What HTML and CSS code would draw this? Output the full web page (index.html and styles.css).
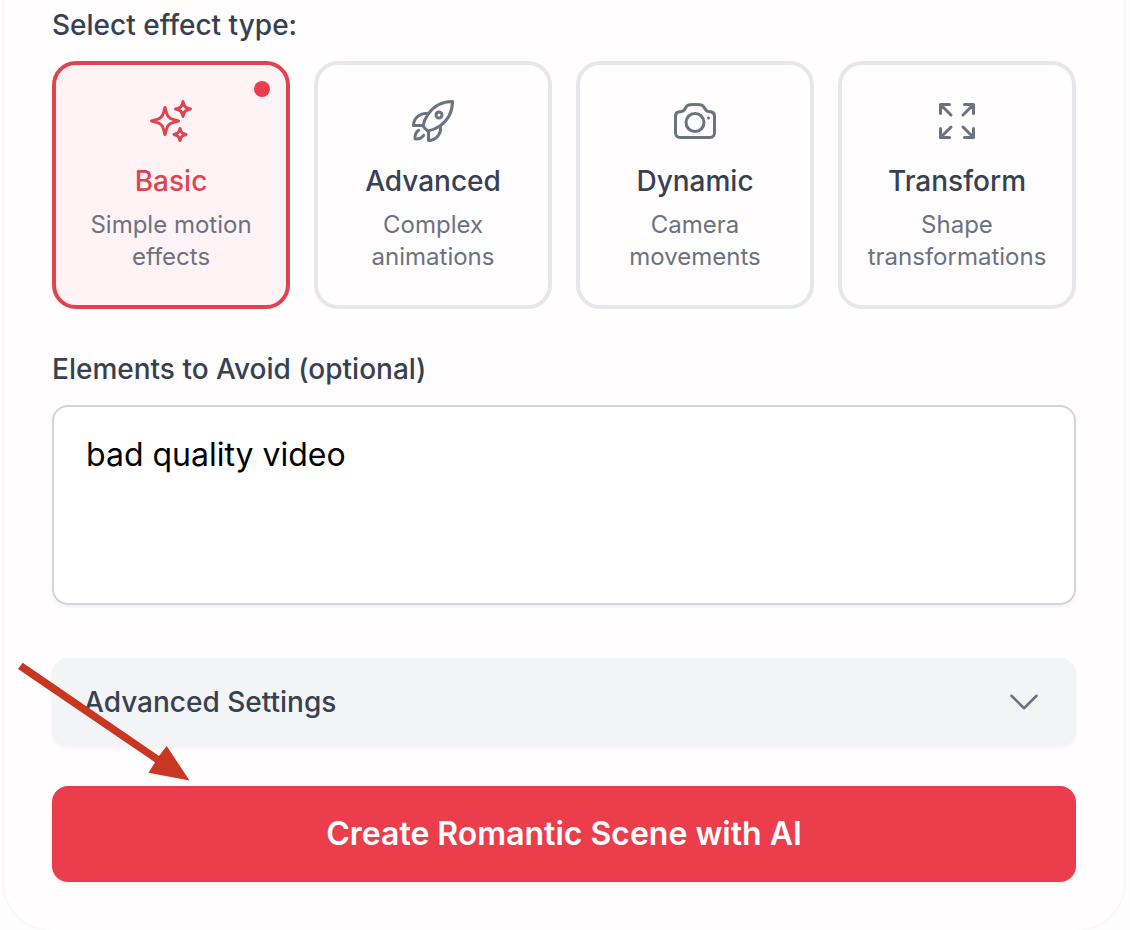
FILE: index.html
```html
<!DOCTYPE html>
<html lang="en">
<head>
<meta charset="utf-8">
<meta name="viewport" content="width=device-width, initial-scale=1">
<title>Create Romantic Scene</title>
<link rel="stylesheet" href="styles.css">
</head>
<body>
<form class="panel">
  <fieldset class="effects">
    <legend class="label">Select effect type:</legend>
    <div class="effect-grid">
      <button type="button" class="effect is-selected" aria-pressed="true">
        <span class="dot"></span>
        <svg class="effect-icon" viewBox="0 0 24 24" aria-hidden="true"><path d="M9.813 15.904 9 18.75l-.813-2.846a4.5 4.5 0 0 0-3.09-3.09L2.25 12l2.846-.813a4.5 4.5 0 0 0 3.09-3.09L9 5.25l.813 2.846a4.5 4.5 0 0 0 3.09 3.09L15.75 12l-2.846.813a4.5 4.5 0 0 0-3.09 3.09ZM18.259 8.715 18 9.75l-.259-1.035a3.375 3.375 0 0 0-2.455-2.456L14.25 6l1.036-.259a3.375 3.375 0 0 0 2.455-2.456L18 2.25l.259 1.035a3.375 3.375 0 0 0 2.456 2.456L21.75 6l-1.035.259a3.375 3.375 0 0 0-2.456 2.456ZM16.894 20.567 16.5 21.75l-.394-1.183a2.25 2.25 0 0 0-1.423-1.423L13.5 18.75l1.183-.394a2.25 2.25 0 0 0 1.423-1.423l.394-1.183.394 1.183a2.25 2.25 0 0 0 1.423 1.423l1.183.394-1.183.394a2.25 2.25 0 0 0-1.423 1.423Z"/></svg>
        <span class="effect-name">Basic</span>
        <span class="effect-text">Simple motion effects</span>
      </button>
      <button type="button" class="effect" aria-pressed="false">
        <svg class="effect-icon" viewBox="0 0 24 24" aria-hidden="true"><path d="M15.59 14.37a6 6 0 0 1-5.84 7.38v-4.8m5.84-2.58a14.98 14.98 0 0 0 6.16-12.12A14.98 14.98 0 0 0 9.631 8.41m5.96 5.96a14.926 14.926 0 0 1-5.841 2.58m-.119-8.54a6 6 0 0 0-7.381 5.84h4.8m2.581-5.84a14.927 14.927 0 0 0-2.58 5.84m2.699 2.7c-.103.021-.207.041-.311.06a15.09 15.09 0 0 1-2.448-2.448 14.9 14.9 0 0 1 .06-.312m-2.24 2.39a4.493 4.493 0 0 0-1.757 4.306 4.493 4.493 0 0 0 4.306-1.758M16.5 9a1.5 1.5 0 1 1-3 0 1.5 1.5 0 0 1 3 0Z"/></svg>
        <span class="effect-name">Advanced</span>
        <span class="effect-text">Complex animations</span>
      </button>
      <button type="button" class="effect" aria-pressed="false">
        <svg class="effect-icon" viewBox="0 0 24 24" aria-hidden="true"><path d="M6.827 6.175A2.31 2.31 0 0 1 5.186 7.23c-.38.054-.757.112-1.134.175C2.999 7.58 2.25 8.507 2.25 9.574V18a2.25 2.25 0 0 0 2.25 2.25h15A2.25 2.25 0 0 0 21.75 18V9.574c0-1.067-.75-1.994-1.802-2.169a47.865 47.865 0 0 0-1.134-.175 2.31 2.31 0 0 1-1.64-1.055l-.822-1.316a2.192 2.192 0 0 0-1.736-1.039 48.774 48.774 0 0 0-5.232 0 2.192 2.192 0 0 0-1.736 1.039l-.821 1.316Z"/><path d="M16.5 12.75a4.5 4.5 0 1 1-9 0 4.5 4.5 0 0 1 9 0ZM18.75 10.5h.008v.008h-.008V10.5Z"/></svg>
        <span class="effect-name">Dynamic</span>
        <span class="effect-text">Camera movements</span>
      </button>
      <button type="button" class="effect" aria-pressed="false">
        <svg class="effect-icon" viewBox="0 0 24 24" aria-hidden="true"><path d="M3.75 3.75v4.5m0-4.5h4.5m-4.5 0L9 9M3.75 20.25v-4.5m0 4.5h4.5m-4.5 0L9 15M20.25 3.75h-4.5m4.5 0v4.5m0-4.5L15 9m5.25 11.25h-4.5m4.5 0v-4.5m0 4.5L15 15"/></svg>
        <span class="effect-name">Transform</span>
        <span class="effect-text">Shape transformations</span>
      </button>
    </div>
  </fieldset>

  <div class="field">
    <label class="label" for="avoid">Elements to Avoid (optional)</label>
    <textarea id="avoid" class="avoid">bad quality video</textarea>
  </div>

  <div class="actions">
    <button type="button" class="settings" aria-expanded="false">
      <span>Advanced Settings</span>
      <svg class="chevron" viewBox="0 0 24 24" aria-hidden="true"><path d="m19.5 8.25-7.5 7.5-7.5-7.5"/></svg>
    </button>
    <button type="submit" class="create">Create Romantic Scene with AI</button>
    <svg class="pointer" viewBox="0 0 172 119" aria-hidden="true"><path d="M4.7.7 141 94l7.700-10 22.800 34.500-41-7.800 6.500-10.400L0 7Z"/></svg>
  </div>
</form>
</body>
</html>
```

FILE: styles.css
```css
* {
  box-sizing: border-box;
}

body {
  margin: 0;
  background: #fdfdfd;
  color: #374151;
  font-family: Inter, "Liberation Sans", sans-serif;
  font-size: 28px;
  line-height: 40px;
}

button,
textarea {
  margin: 0;
  font: inherit;
}

.panel {
  display: flex;
  flex-direction: column;
  gap: 40px;
  margin: 0 6px 0 4px;
  padding: 5px 48px 48px;
  border-radius: 0 0 48px 48px;
  background: #fffdfe;
  box-shadow: 0 0 4px rgba(0, 0, 0, 0.06);
}

.effects {
  min-width: 0;
  margin: 0;
  padding: 0;
  border: 0;
}

.label {
  display: block;
  margin-bottom: 16px;
  padding: 0;
  font-weight: 500;
}

.effect-grid {
  display: grid;
  grid-template-columns: repeat(4, minmax(0, 1fr));
  gap: 24px;
}

.effect {
  position: relative;
  display: flex;
  flex-direction: column;
  align-items: center;
  padding: 32px 16px;
  border: 4px solid #e5e7eb;
  border-radius: 24px;
  background: transparent;
  color: #6b7280;
  text-align: center;
}

.effect-icon,
.chevron {
  fill: none;
  stroke: currentColor;
  stroke-width: 1.5;
  stroke-linecap: round;
  stroke-linejoin: round;
}

.effect-icon {
  width: 48px;
  height: 48px;
  margin-bottom: 16px;
}

.effect-name {
  margin-bottom: 8px;
  color: #374151;
  font-weight: 500;
}

.effect-text {
  font-size: 24px;
  line-height: 32px;
}

.is-selected {
  border-color: #e0444f;
  background: #fff3f5;
}

.is-selected .effect-icon,
.is-selected .effect-name {
  color: #e0444f;
}

.dot {
  position: absolute;
  top: 16px;
  right: 16px;
  width: 16px;
  height: 16px;
  border-radius: 50%;
  background: #eb3d4b;
}

.avoid {
  display: block;
  width: 100%;
  height: 200px;
  padding: 24px 32px;
  border: 2px solid #d1d5db;
  border-radius: 16px;
  background: #fff;
  box-shadow: 0 2px 4px rgba(0, 0, 0, 0.05);
  color: #000;
  font-size: 32px;
  line-height: 48px;
  resize: none;
}

.actions {
  position: relative;
  display: flex;
  flex-direction: column;
  gap: 40px;
  margin-top: 13px;
}

.settings {
  display: flex;
  align-items: center;
  justify-content: space-between;
  padding: 24px 32px;
  border: 0;
  border-radius: 16px;
  background: #f3f4f6;
  box-shadow: 0 2px 4px rgba(0, 0, 0, 0.05);
  color: #374151;
  font-weight: 500;
}

.chevron {
  width: 40px;
  height: 40px;
  color: #6b7280;
}

.create {
  padding: 24px 32px;
  border: 0;
  border-radius: 16px;
  background: #eb3d4b;
  box-shadow: 0 2px 4px rgba(0, 0, 0, 0.05);
  color: #fff;
  font-size: 32px;
  font-weight: 600;
  line-height: 48px;
}

.pointer {
  position: absolute;
  top: 4px;
  left: -34px;
  width: 172px;
  height: 119px;
  fill: #c93622;
  pointer-events: none;
}
```
